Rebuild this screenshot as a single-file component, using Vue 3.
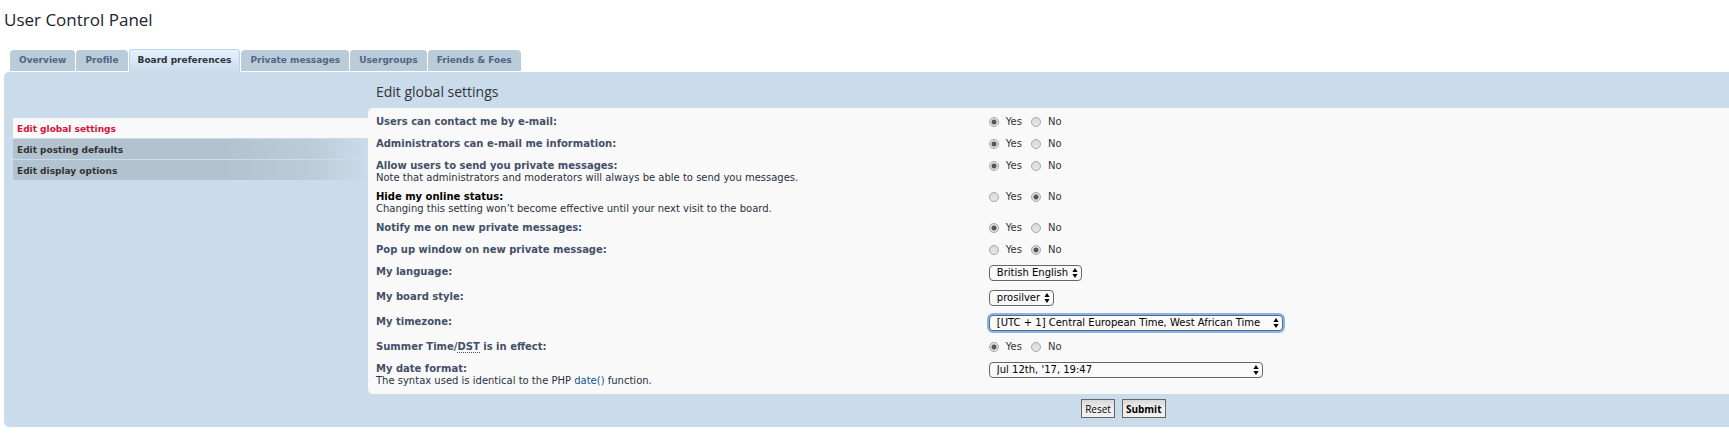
<template>
  <div class="ucp">
    <h2 class="page-title">User Control Panel</h2>

    <nav class="tabs">
      <a
        v-for="tab in tabs"
        :key="tab"
        href="#"
        :class="['tab', { active: tab === activeTab }]"
        @click.prevent="activeTab = tab">
        {{ tab }}
      </a>
    </nav>

    <div class="panel">
      <nav class="side-menu">
        <a
          v-for="item in menu"
          :key="item"
          href="#"
          :class="['side-link', { active: item === activeItem }]"
          @click.prevent="activeItem = item">
          {{ item }}
        </a>
      </nav>

      <form class="content" @submit.prevent>
        <h3 class="section-title">Edit global settings</h3>

        <div class="fields">
          <div v-for="field in fields" :key="field.id" :class="['field', { 'has-select': field.options }]">
            <div class="caption">
              <label :for="field.id" :class="['name', { hovered: field.id === 'hideonline' }]">
                <template v-if="field.id === 'dst'">Summer Time/<abbr title="Daylight Saving Time">DST</abbr> is in effect:</template>
                <template v-else>{{ field.label }}</template>
              </label>
              <span v-if="field.id === 'dateformat'" class="note">
                The syntax used is identical to the PHP <a href="#">date()</a> function.
              </span>
              <span v-else-if="field.note" class="note">{{ field.note }}</span>
            </div>

            <div v-if="field.options" :class="['select-box', field.id]">
              <select :id="field.id" v-model="field.value">
                <option v-for="option in field.options" :key="option">{{ option }}</option>
              </select>
              <svg class="arrows" viewBox="0 0 6 10" aria-hidden="true">
                <path d="M3 0 5.6 4H.4zM3 10 .4 6h5.2z" />
              </svg>
            </div>
            <div v-else class="radios">
              <label class="choice">
                <input :id="field.id" v-model="field.value" type="radio" :name="field.id" value="yes" />
                Yes
              </label>
              <label class="choice">
                <input v-model="field.value" type="radio" :name="field.id" value="no" />
                No
              </label>
            </div>
          </div>
        </div>

        <div class="buttons">
          <button type="reset" class="btn">Reset</button>
          <button type="submit" class="btn btn-submit">Submit</button>
        </div>
      </form>
    </div>
  </div>
</template>

<script setup>
import { ref } from 'vue';

const tabs = ['Overview', 'Profile', 'Board preferences', 'Private messages', 'Usergroups', 'Friends & Foes'];
const activeTab = ref('Board preferences');

const menu = ['Edit global settings', 'Edit posting defaults', 'Edit display options'];
const activeItem = ref('Edit global settings');

const fields = ref([
  { id: 'viewemail', label: 'Users can contact me by e-mail:', value: 'yes' },
  { id: 'massemail', label: 'Administrators can e-mail me information:', value: 'yes' },
  {
    id: 'allowpm',
    label: 'Allow users to send you private messages:',
    note: 'Note that administrators and moderators will always be able to send you messages.',
    value: 'yes',
  },
  {
    id: 'hideonline',
    label: 'Hide my online status:',
    note: 'Changing this setting won’t become effective until your next visit to the board.',
    value: 'no',
  },
  { id: 'notifypm', label: 'Notify me on new private messages:', value: 'yes' },
  { id: 'popuppm', label: 'Pop up window on new private message:', value: 'no' },
  { id: 'lang', label: 'My language:', value: 'British English', options: ['British English'] },
  { id: 'boardstyle', label: 'My board style:', value: 'prosilver', options: ['prosilver'] },
  {
    id: 'timezone',
    label: 'My timezone:',
    value: '[UTC + 1] Central European Time, West African Time',
    options: ['[UTC + 1] Central European Time, West African Time'],
  },
  { id: 'dst', value: 'yes' },
  { id: 'dateformat', label: 'My date format:', value: "Jul 12th, '17, 19:47", options: ["Jul 12th, '17, 19:47"] },
]);
</script>

<style>
body {
  background: #fff;
}
</style>

<style scoped>
.ucp {
  padding: 8px 0 8px 4px;
  font-family: Verdana, "DejaVu Sans", sans-serif;
  font-size: 10px;
  line-height: 12px;
  color: #333;
}

.ucp * {
  box-sizing: border-box;
}

.page-title {
  margin: 0 0 17px;
  font-family: "Trebuchet MS", "Open Sans", sans-serif;
  font-size: 17px;
  font-weight: 400;
  line-height: 24px;
  color: #1c2430;
}

.tabs {
  display: flex;
  align-items: flex-start;
  gap: 1px;
  padding-left: 6px;
}

.tab {
  height: 21px;
  margin-top: 1px;
  padding: 4px 9px;
  border-radius: 4px 4px 0 0;
  background: #bacbd9;
  color: #536482;
  font-size: 9px;
  font-weight: 700;
  text-decoration: none;
  white-space: nowrap;
}

.tab.active {
  height: 23px;
  margin-top: 0;
  padding: 4px 8px;
  border: 1px solid #bfd0e0;
  border-width: 1px 1px 0;
  background: linear-gradient(#e2f2ff, #cadceb);
  color: #333;
}

.panel {
  display: flex;
  min-height: 355px;
  border-radius: 5px 0 0 5px;
  background: #cadceb;
}

.side-menu {
  display: flex;
  flex-direction: column;
  gap: 1px;
  width: 21.1%;
  padding: 46px 0 0 9px;
}

.side-link {
  padding: 5px 4px 3px;
  background: linear-gradient(to right, #b2c2cf 60%, #bccdda 85%, #cadceb);
  color: #333;
  font-size: 9px;
  font-weight: 700;
  text-decoration: none;
}

.side-link.active {
  background: #f9f9f9;
  color: #d31141;
}

.content {
  flex: 1;
  padding-bottom: 9px;
}

.section-title {
  margin: 0;
  padding: 9px 8px 5px;
  font-family: "Trebuchet MS", "Open Sans", sans-serif;
  font-size: 14px;
  font-weight: 400;
  line-height: 22px;
}

.fields {
  padding: 8px 0 0 8px;
  border-radius: 5px 0 0 5px;
  background: #f9f9f9;
}

.field {
  display: grid;
  grid-template-columns: 45% 1fr;
  column-gap: 4px;
  align-items: start;
  padding-bottom: 10px;
}

.field.has-select {
  padding-bottom: 10px;
}

.field:has(.note) {
  padding-bottom: 7px;
}

.name {
  display: block;
  color: #425067;
  font-weight: 700;
}

.name.hovered {
  color: #000;
}

.name abbr {
  border-bottom: 1px dotted #425067;
  text-decoration: none;
}

.note {
  display: block;
  color: #28313f;
}

.note a {
  color: #105289;
  text-decoration: none;
}

.radios {
  display: flex;
  gap: 9px;
}

.choice {
  display: flex;
  align-items: center;
  gap: 7px;
}

.choice input {
  appearance: none;
  width: 10px;
  height: 10px;
  margin: 0;
  border: 1px solid #a5a5a5;
  border-radius: 50%;
  background: linear-gradient(#d9d9d9, #e8e8e8);
}

.choice input:checked {
  background: radial-gradient(circle, #555 2px, #e2e2e2 3px);
}

.select-box {
  position: relative;
  justify-self: start;
  margin-top: -1px;
}

.select-box select {
  appearance: none;
  display: block;
  width: 100%;
  height: 16px;
  margin: 0;
  padding: 0 12px 0 7px;
  border: 1px solid #666;
  border-radius: 4px;
  outline: none;
  background: #fafafa;
  color: #000;
  font: inherit;
}

.arrows {
  position: absolute;
  top: 3px;
  right: 4px;
  width: 6px;
  height: 10px;
  fill: #000;
  pointer-events: none;
}

.timezone {
  width: 294px;
}

.timezone select {
  box-shadow: 0 0 0 2px #7fb6f5;
}

.dateformat {
  width: 274px;
}

.buttons {
  display: flex;
  gap: 7px;
  padding: 5px 0 0 52.4%;
}

.btn {
  height: 19px;
  padding: 0 3px;
  border: 1px solid #666;
  background: linear-gradient(#d8d8d8, #efefef 50%);
  color: #000;
  font-family: "Lucida Grande", "Open Sans", sans-serif;
  font-size: 10px;
  line-height: 16px;
}

.btn-submit {
  font-weight: 700;
}
</style>
